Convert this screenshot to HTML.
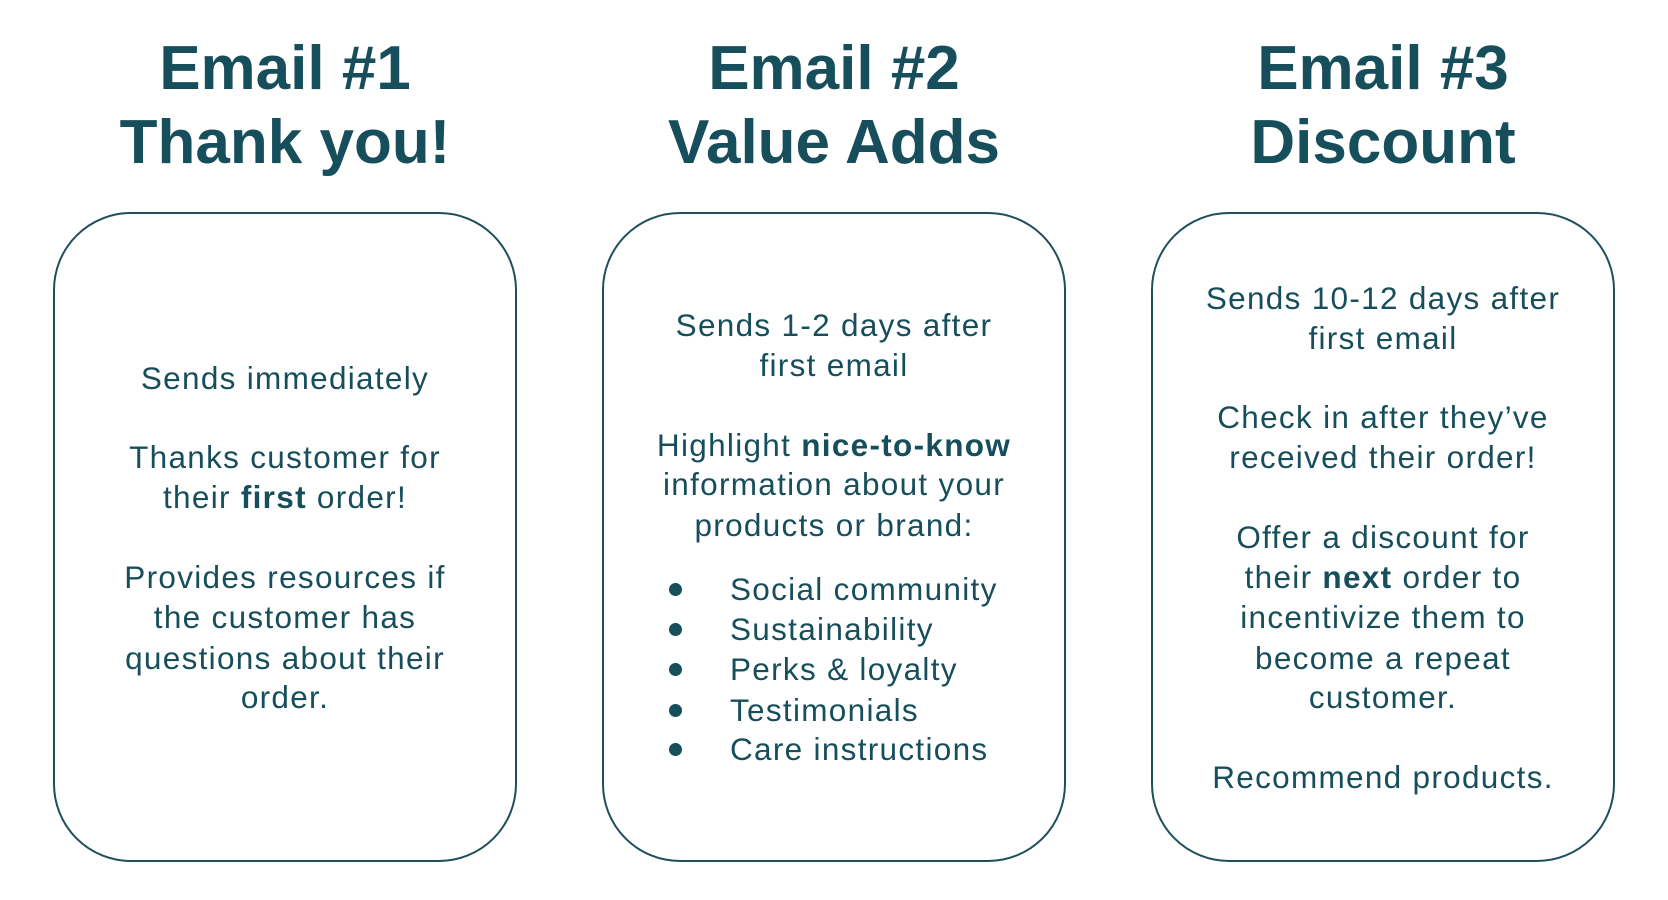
<!DOCTYPE html>
<html><head><meta charset="utf-8"><style>
html,body{margin:0;padding:0;background:#fff;width:1668px;height:900px;overflow:hidden}
body{position:relative;font-family:"Liberation Sans",sans-serif;color:#174e5b}
.card{position:absolute;top:212px;width:464px;height:650px;border:2px solid #1f4f5c;border-radius:78px;box-sizing:border-box}
.h{position:absolute;width:560px;text-align:center;font-weight:bold;font-size:62px;line-height:74px;top:32px;letter-spacing:0px}
.l{position:absolute;width:480px;text-align:center;font-size:31.5px;line-height:40px;white-space:nowrap;letter-spacing:1.3px}
.b{position:absolute;font-size:31.5px;line-height:40px;white-space:nowrap;letter-spacing:1.3px}
.dot{position:absolute;width:13px;height:13px;border-radius:50%;background:#174e5b}
</style></head><body>
<div class="card" style="left:53px"></div>
<div class="card" style="left:602px"></div>
<div class="card" style="left:1151px"></div>

<div class="h" style="left:5px">Email #1<br>Thank you!</div>
<div class="h" style="left:554px">Email #2<br>Value Adds</div>
<div class="h" style="left:1103px">Email #3<br>Discount</div>

<div class="l" style="left:45px;top:358px">Sends immediately</div>
<div class="l" style="left:45px;top:437px">Thanks customer for</div>
<div class="l" style="left:45px;top:477px">their <b>first</b> order!</div>
<div class="l" style="left:45px;top:557px">Provides resources if</div>
<div class="l" style="left:45px;top:597px">the customer has</div>
<div class="l" style="left:45px;top:638px">questions about their</div>
<div class="l" style="left:45px;top:677px">order.</div>

<div class="l" style="left:594px;top:305px">Sends 1-2 days after</div>
<div class="l" style="left:594px;top:345px">first email</div>
<div class="l" style="left:594px;top:425px">Highlight <b>nice-to-know</b></div>
<div class="l" style="left:594px;top:464px">information about your</div>
<div class="l" style="left:594px;top:505px">products or brand:</div>
<div class="dot" style="left:669px;top:583px"></div><div class="b" style="left:730px;top:569px">Social community</div>
<div class="dot" style="left:669px;top:623px"></div><div class="b" style="left:730px;top:609px">Sustainability</div>
<div class="dot" style="left:669px;top:663px"></div><div class="b" style="left:730px;top:649px">Perks &amp; loyalty</div>
<div class="dot" style="left:669px;top:704px"></div><div class="b" style="left:730px;top:690px">Testimonials</div>
<div class="dot" style="left:669px;top:743px"></div><div class="b" style="left:730px;top:729px">Care instructions</div>

<div class="l" style="left:1143px;top:278px">Sends 10-12 days after</div>
<div class="l" style="left:1143px;top:318px">first email</div>
<div class="l" style="left:1143px;top:397px">Check in after they’ve</div>
<div class="l" style="left:1143px;top:437px">received their order!</div>
<div class="l" style="left:1143px;top:517px">Offer a discount for</div>
<div class="l" style="left:1143px;top:557px">their <b>next</b> order to</div>
<div class="l" style="left:1143px;top:597px">incentivize them to</div>
<div class="l" style="left:1143px;top:638px">become a repeat</div>
<div class="l" style="left:1143px;top:677px">customer.</div>
<div class="l" style="left:1143px;top:757px">Recommend products.</div>
</body></html>
